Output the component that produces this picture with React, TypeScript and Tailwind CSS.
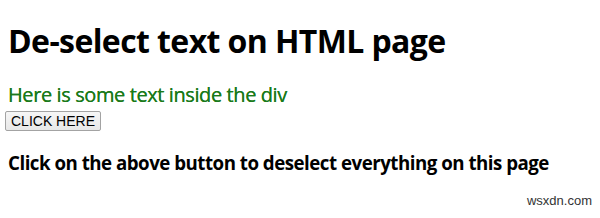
export default function App() {
  return (
    <div className="relative h-[218px] w-[600px] overflow-hidden bg-white px-2 pt-[19px] font-['Open_Sans',sans-serif] text-black">
      <h1 className="text-[32px] font-bold leading-[43px] tracking-[-0.6px]">De-select text on HTML page</h1>
      <div className="mt-[20px] text-[20px] leading-[26px] tracking-[-0.4px] text-[#1b7a1b] [text-shadow:0_0_0.4px_#1b7a1b]">
        Here is some text inside the div
      </div>
      <button className="-ml-[3px] mt-[1px] h-[20px] w-[96px] rounded-[2px] border border-[#a3a3a3] bg-gradient-to-b from-[#f6f6f6] to-[#e8e8e8] font-['Liberation_Sans',sans-serif] text-[14px] leading-[18px] text-black">
        CLICK HERE
      </button>
      <h3 className="mt-[18px] text-[18.72px] font-bold leading-[25px] tracking-[-0.5px]">
        Click on the above button to deselect everything on this page
      </h3>
      <div className="absolute bottom-[10px] right-[8px] font-['Liberation_Sans',sans-serif] text-[13px] leading-[15px] text-[#333]">
        wsxdn.com
      </div>
    </div>
  );
}
